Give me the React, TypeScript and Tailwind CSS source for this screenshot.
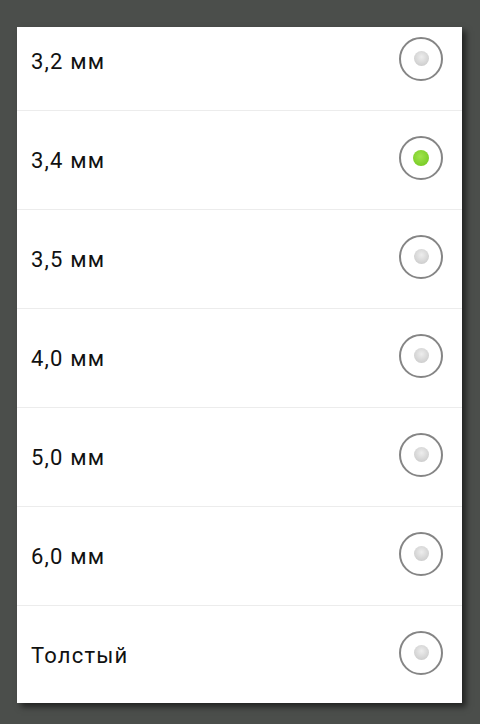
const options = ["3,2 мм", "3,4 мм", "3,5 мм", "4,0 мм", "5,0 мм", "6,0 мм", "Толстый"];

function Radio({ checked }: { checked: boolean }) {
  return (
    <div className="w-[44px] h-[44px] mb-[5px] rounded-full border-2 border-[#858585] flex items-center justify-center bg-white">
      {checked ? (
        <div className="w-[16px] h-[16px] rounded-full bg-[radial-gradient(circle_at_45%_40%,#a0e44c,#6cc41a)]" />
      ) : (
        <div className="w-[15px] h-[15px] rounded-full bg-[radial-gradient(circle_at_50%_40%,#ededed,#c4c4c4)]" />
      )}
    </div>
  );
}

export default function App() {
  const selected = 1;
  return (
    <div className="w-[480px] h-[724px] bg-[#4b4e4b] pt-[27px] pl-[17px] overflow-hidden">
      <div className="w-[445px] h-[676px] bg-white overflow-hidden shadow-[4px_4px_6px_rgba(0,0,0,0.55)]">
        <div className="-mt-[15px]">
          {options.map((o, i) => (
            <div
              key={o}
              className="h-[99px] flex items-center justify-between pl-[14px] pr-[19px] border-b border-[#ececec]"
            >
              <span className="text-[22px] tracking-[1.2px] text-[#111] font-['Roboto','Liberation_Sans',sans-serif]">{o}</span>
              <Radio checked={i === selected} />
            </div>
          ))}
        </div>
      </div>
    </div>
  );
}
